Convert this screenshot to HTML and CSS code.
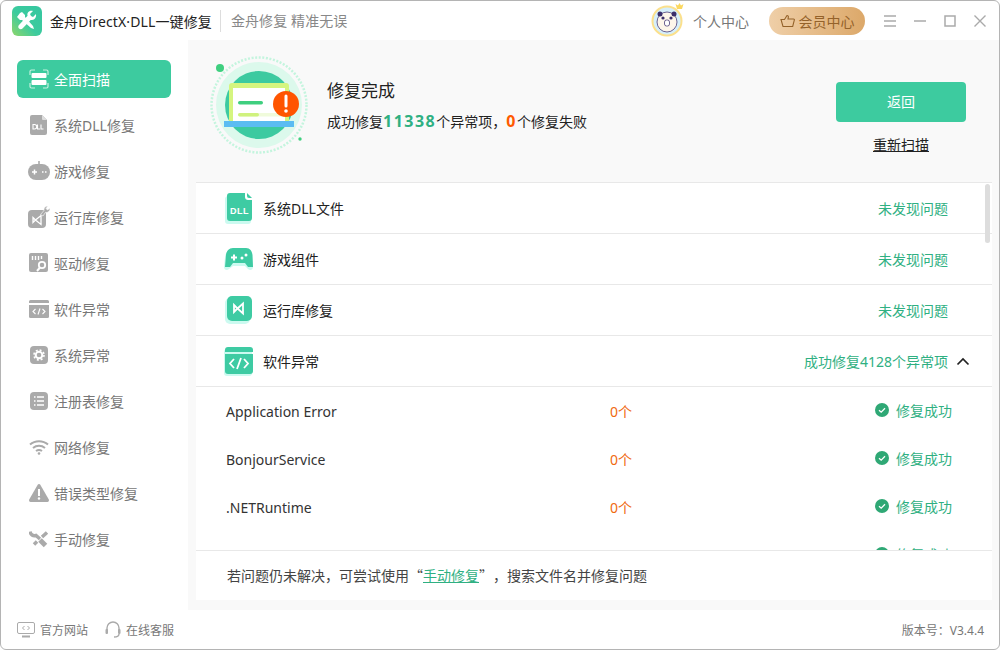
FILE: index.html
```html
<!DOCTYPE html>
<html lang="zh-CN">
<head>
    <meta charset="UTF-8">
    <title>金舟DirectX·DLL一键修复</title>
    <link rel="stylesheet" href="styles.css">
</head>
<body>
<div class="window">
    <header class="titlebar">
        <svg class="logo" width="30" height="30" viewBox="0 0 30 30">
            <defs><linearGradient id="lg" x1="0" y1="1" x2="1" y2="0"><stop offset="0" stop-color="#8fd66a"/><stop offset=".45" stop-color="#3ccb9e"/><stop offset="1" stop-color="#35c6a0"/></linearGradient></defs>
            <rect width="30" height="30" rx="6" fill="url(#lg)"/>
            <path d="M8 7l2-1 3 3 0 2 8 9 1 3-3-1-9-8h-2l-3-3z" fill="#fff"/>
            <path d="M24 8l-3 3-2-1-1-2 3-3c-2-.6-4 0-5 1.500-.7 1-.8 2.200-.4 3.300L7 19c-1 1-1 2.500 0 3.500s2.500 1 3.500 0l8.200-8.600c1.200.4 2.500.2 3.500-.6 1.500-1.200 2.200-3.300 1.800-5.300z" fill="#fff"/>
        </svg>
        <span class="app-name">金舟DirectX·DLL一键修复</span>
        <span class="slogan">金舟修复 精准无误</span>
        <svg class="avatar" width="34" height="38" viewBox="0 0 34 38">
            <circle cx="16" cy="21" r="15.500" fill="#fbe08c"/>
            <circle cx="16" cy="21" r="13.500" fill="#d6effa"/>
            <circle cx="16" cy="22" r="10" fill="#fdf6ea" stroke="#4b3f78" stroke-width=".8"/>
            <circle cx="9" cy="14" r="2.500" fill="#3b2f6b"/><circle cx="23" cy="14" r="2.500" fill="#3b2f6b"/>
            <circle cx="12" cy="18" r="1.600" fill="#3b2f6b"/><circle cx="20" cy="18" r="1.600" fill="#3b2f6b"/>
            <rect x="13.500" y="20" width="5" height="6" rx="2" fill="#fff" stroke="#4b3f78" stroke-width=".8"/>
            <path d="M26 9l-1.500-5 2.500 1.500L28.500 3l1.500 2.500L32.500 4 31 9z" fill="#fbd860"/>
        </svg>
        <span class="user-link">个人中心</span>
        <a class="vip-btn" href="#">
            <svg width="15" height="14" viewBox="0 0 15 14" fill="none" stroke="#94622a" stroke-width="1.100"><path d="M1 5.500h3.500L7 1.500c1 0 1.600.8 1.300 1.800L8 5h5.500c.7 0 1 .6.800 1.200l-1.600 6.300H3L1 5.500z"/></svg>
            会员中心
        </a>
        <div class="win-controls">
            <svg width="14" height="14" viewBox="0 0 14 14" stroke="#aaa" stroke-width="1.500"><path d="M1 2h12M1 7h12M1 12h12"/></svg>
            <svg width="14" height="14" viewBox="0 0 14 14" stroke="#aaa" stroke-width="1.500"><path d="M1 7h12"/></svg>
            <svg width="14" height="14" viewBox="0 0 14 14" fill="none" stroke="#aaa" stroke-width="1.500"><rect x="2" y="2" width="10" height="10"/></svg>
            <svg width="14" height="14" viewBox="0 0 14 14" stroke="#aaa" stroke-width="1.400"><path d="M1.500 1.500l11 11M12.500 1.500l-11 11"/></svg>
        </div>
    </header>

    <div class="body">
        <nav class="sidebar">
            <a class="nav-item active" href="#">
                <svg width="20" height="20" viewBox="0 0 20 20" fill="none" stroke="#c6f0e0" stroke-width="1.200"><path d="M1 6V2.500C1 1.700 1.700 1 2.500 1H6M14 1h3.500c.8 0 1.500.7 1.500 1.500V6M19 14v3.500c0 .8-.7 1.500-1.500 1.500H14M6 19H2.500C1.700 19 1 18.300 1 17.500V14"/><rect x="2.500" y="4" width="15" height="5" rx="1" fill="#fff" stroke="none"/><rect x="2.500" y="11" width="15" height="5" rx="1" fill="#fff" stroke="none"/></svg>
                全面扫描
            </a>
            <a class="nav-item" href="#">
                <svg width="20" height="20" viewBox="0 0 20 20"><path d="M3 0h10l5 5v13a2 2 0 0 1-2 2H3a2 2 0 0 1-2-2V2a2 2 0 0 1 2-2z" fill="#aaa"/><path d="M13 0l5 5h-4a1 1 0 0 1-1-1z" fill="#ddd"/><path d="M4 9.500v4.500h1.500a2.200 2.200 0 0 0 0-4.500zM8.500 9.500V14H11M12 9.500V14h2.500" fill="none" stroke="#fff" stroke-width="1.100"/></svg>
                系统DLL修复
            </a>
            <a class="nav-item" href="#">
                <svg width="22" height="20" viewBox="0 0 22 20"><path d="M10.200 0h1.600v4h-1.600z" fill="#aaa"/><rect y="3" width="22" height="16" rx="8" fill="#aaa"/><path d="M4 11h5M6.500 8.500v5M14 11h1.500M17 11h1.500" stroke="#fff" stroke-width="1.500"/></svg>
                游戏修复
            </a>
            <a class="nav-item" href="#">
                <svg width="22" height="22" viewBox="0 0 22 22"><rect y="4" width="18" height="18" rx="4" fill="#aaa"/><path d="M5 11.500l2.500 2.500L5 16.500zM7.500 14L13 9.500v9z" fill="none" stroke="#fff" stroke-width="1.300"/><path d="M12.500 8.500l3.500-4c-.5-2 1-4.500 4-4.500l-2 2.500 1.500 1.500L22 2c.3 3-2.500 5-4.500 4.300L15 10z" fill="#aaa" stroke="#fff" stroke-width=".6"/></svg>
                运行库修复
            </a>
            <a class="nav-item" href="#">
                <svg width="20" height="20" viewBox="0 0 20 20"><rect width="19" height="19" rx="2" fill="#aaa"/><path d="M3.500 3v4M6.500 3v4M9.500 3v4M12.500 3v3" stroke="#fff" stroke-width="1.400"/><circle cx="13" cy="12" r="3.200" fill="none" stroke="#fff" stroke-width="1.800"/><path d="M11 14.500L8 18" stroke="#fff" stroke-width="2"/></svg>
                驱动修复
            </a>
            <a class="nav-item" href="#">
                <svg width="20" height="18" viewBox="0 0 20 18"><path d="M1.500 0h17A1.500 1.500 0 0 1 20 1.500V3H0V1.500A1.500 1.500 0 0 1 1.500 0z" fill="#aaa"/><path d="M0 5h20v11.500a1.500 1.500 0 0 1-1.500 1.500h-17A1.500 1.500 0 0 1 0 16.500z" fill="#aaa"/><path d="M6.500 9L4 11.500 6.500 14M13.500 9l2.500 2.500-2.500 2.500M11 8.500l-2 6" fill="none" stroke="#fff" stroke-width="1.100"/></svg>
                软件异常
            </a>
            <a class="nav-item" href="#">
                <svg width="18" height="18" viewBox="0 0 18 18"><rect width="18" height="18" rx="4" fill="#aaa"/><circle cx="9" cy="9" r="3.300" fill="none" stroke="#fff" stroke-width="2"/><circle cx="9" cy="9" r="5" fill="none" stroke="#fff" stroke-width="1.600" stroke-dasharray="2 1.930"/></svg>
                系统异常
            </a>
            <a class="nav-item" href="#">
                <svg width="18" height="18" viewBox="0 0 18 18"><rect width="18" height="18" rx="4" fill="#aaa"/><path d="M4 5h1.500M7 5h7M4 9h1.500M7 9h7M4 13h1.500M7 13h7" stroke="#fff" stroke-width="1.400"/></svg>
                注册表修复
            </a>
            <a class="nav-item" href="#">
                <svg width="20" height="16" viewBox="0 0 20 16" fill="none" stroke="#aaa" stroke-width="2"><path d="M1 5.500c5-4.500 13-4.500 18 0M4 9c3.500-3 8.500-3 12 0M7 12c1.800-1.300 4.200-1.300 6 0"/><circle cx="10" cy="14.500" r="1.300" fill="#aaa" stroke="none"/></svg>
                网络修复
            </a>
            <a class="nav-item" href="#">
                <svg width="20" height="18" viewBox="0 0 20 18"><path d="M10 0c.6 0 1 .3 1.300.8l8.500 14.800c.5 1-.1 2.400-1.300 2.400h-17C.3 18-.3 16.600.2 15.600L8.700.8C9 .3 9.400 0 10 0z" fill="#aaa"/><path d="M10 5v7" stroke="#fff" stroke-width="2"/><circle cx="10" cy="14.500" r="1.200" fill="#fff"/></svg>
                错误类型修复
            </a>
            <a class="nav-item" href="#">
                <svg width="20" height="18" viewBox="0 0 20 18" fill="none" stroke="#aaa"><path d="M1 1.500c.5 3 3 5 6 4L11 9" stroke-width="3.500"/><path d="M11 10l5.500 5.500" stroke-width="5"/><path d="M18 2.500l-5 4.500M8 11.500l-3 3" stroke-width="3.500"/></svg>
                手动修复
            </a>
        </nav>

        <main class="main">
            <section class="hero">
                <svg class="hero-art" width="100" height="100" viewBox="0 0 100 100">
                    <circle cx="50" cy="50" r="47.500" fill="none" stroke="#c4f5de" stroke-width="2.500" stroke-dasharray="2 1.600"/>
                    <circle cx="50" cy="50" r="43" fill="#dcf9ec"/>
                    <circle cx="50" cy="50" r="34" fill="#3ccaa0"/>
                    <circle cx="11" cy="13" r="4" fill="#3fcf7f"/>
                    <circle cx="91" cy="84" r="1.700" fill="#3fcf7f"/>
                    <rect x="20" y="28" width="60" height="40" rx="3" fill="#d5f57f"/>
                    <rect x="24" y="33" width="52" height="35" fill="#fff"/>
                    <rect x="29" y="46" width="25" height="3.500" rx="1.700" fill="#3fcf7f"/>
                    <rect x="29" y="58" width="46" height="3.500" rx="1.700" fill="#f0fbdb"/>
                    <rect x="29" y="58" width="21" height="3.500" rx="1.700" fill="#d0f27e"/>
                    <rect x="15" y="66" width="70" height="6" fill="#5bbcf2"/>
                    <circle cx="77" cy="49" r="13" fill="#ff5500"/>
                    <path d="M77 41v10" stroke="#fff" stroke-width="3" stroke-linecap="round"/>
                    <circle cx="77" cy="56" r="1.800" fill="#fff"/>
                </svg>
                <div class="hero-text">
                    <h1>修复完成</h1>
                    <p>成功修复<b class="count-ok">11338</b>个异常项，<b class="count-fail">0</b>个修复失败</p>
                </div>
                <div class="hero-actions">
                    <a class="back-btn" href="#">返回</a>
                    <a class="rescan" href="#">重新扫描</a>
                </div>
            </section>

            <section class="panel">
                <div class="result-list">
                    <div class="row">
                        <svg width="28" height="32" viewBox="0 0 28 32"><path d="M3 2h16l8 8v17a3 3 0 0 1-3 3H4a3 3 0 0 1-3-3V4z" fill="#ccfaf0" transform="translate(-1 2)"/><path d="M5 1h15v4a3 3 0 0 0 3 3h4v18a3 3 0 0 1-3 3H5a3 3 0 0 1-3-3V4a3 3 0 0 1 3-3z" fill="#3ecba3"/><path d="M22 1l5 5h-3a2 2 0 0 1-2-2z" fill="#3ecba3"/><text x="14.500" y="21.500" class="dll-mark">DLL</text></svg>
                        <span class="row-title">系统DLL文件</span>
                        <span class="row-status">未发现问题</span>
                    </div>
                    <div class="row">
                        <svg width="30" height="24" viewBox="0 0 30 24"><path d="M9 2h13c4 0 6 3 7 7l1 10c0 3-3 4-5 2l-3-3H10l-4 3c-2 2-5 1-5-2L2 9c.5-4 3-7 7-7z" fill="#ccfaf0" transform="translate(-1 1)"/><path d="M9 1h13c4 0 6 3 6.500 7l.5 12h-5l-3-4H9l-3 4H1l1-12C2.500 4 5 1 9 1z" fill="#3ecba3"/><path d="M7 10.500h6M10 7.500v6" stroke="#fff" stroke-width="2"/><circle cx="18" cy="11" r="1.500" fill="#fff"/><circle cx="22" cy="8" r="1.500" fill="#fff"/></svg>
                        <span class="row-title">游戏组件</span>
                        <span class="row-status">未发现问题</span>
                    </div>
                    <div class="row">
                        <svg width="28" height="28" viewBox="0 0 28 28"><rect y="2" width="25" height="26" rx="5" fill="#ccfaf0"/><rect x="2" y="0" width="25" height="25" rx="5" fill="#3ecba3"/><path d="M9 9l3.500 3.500L9 16zM12.500 12.500L18 7.500v10z" fill="none" stroke="#fff" stroke-width="1.800"/></svg>
                        <span class="row-title">运行库修复</span>
                        <span class="row-status">未发现问题</span>
                    </div>
                    <div class="row">
                        <svg width="30" height="30" viewBox="0 0 30 30"><rect y="3" width="28" height="27" rx="3" fill="#ccfaf0"/><path d="M4 1h22a3 3 0 0 1 3 3v2H1V4a3 3 0 0 1 3-3z" fill="#3ecba3"/><path d="M1 8h28v17a3 3 0 0 1-3 3H4a3 3 0 0 1-3-3z" fill="#3ecba3"/><path d="M10 13l-4 4.500 4 4.500M20 13l4 4.500-4 4.500M17 12l-4 11" fill="none" stroke="#fff" stroke-width="1.800"/></svg>
                        <span class="row-title">软件异常</span>
                        <span class="row-status">成功修复4128个异常项</span>
                        <svg class="chevron" width="14" height="9" viewBox="0 0 14 9" fill="none" stroke="#222" stroke-width="1.700"><path d="M1.500 7.500L7 2l5.500 5.500"/></svg>
                    </div>
                    <div class="sub-row">
                        <span class="sub-name">Application Error</span>
                        <span class="sub-count">0个</span>
                        <span class="sub-state"><svg width="14" height="14" viewBox="0 0 14 14"><circle cx="7" cy="7" r="7" fill="#2fa875"/><path d="M4 7.200l2.200 2L10 5.300" fill="none" stroke="#fff" stroke-width="1.300"/></svg>修复成功</span>
                    </div>
                    <div class="sub-row">
                        <span class="sub-name">BonjourService</span>
                        <span class="sub-count">0个</span>
                        <span class="sub-state"><svg width="14" height="14" viewBox="0 0 14 14"><circle cx="7" cy="7" r="7" fill="#2fa875"/><path d="M4 7.200l2.200 2L10 5.300" fill="none" stroke="#fff" stroke-width="1.300"/></svg>修复成功</span>
                    </div>
                    <div class="sub-row">
                        <span class="sub-name">.NETRuntime</span>
                        <span class="sub-count">0个</span>
                        <span class="sub-state"><svg width="14" height="14" viewBox="0 0 14 14"><circle cx="7" cy="7" r="7" fill="#2fa875"/><path d="M4 7.200l2.200 2L10 5.300" fill="none" stroke="#fff" stroke-width="1.300"/></svg>修复成功</span>
                    </div>
                    <div class="sub-row">
                        <span class="sub-name"></span>
                        <span class="sub-count"></span>
                        <span class="sub-state"><svg width="14" height="14" viewBox="0 0 14 14"><circle cx="7" cy="7" r="7" fill="#2fa875"/></svg>修复成功</span>
                    </div>
                </div>
                <div class="scrollbar"></div>
                <div class="note">若问题仍未解决，可尝试使用<span class="quote">“</span><a href="#">手动修复</a><span class="quote">”</span>，搜索文件名并修复问题</div>
            </section>
        </main>
    </div>

    <footer class="statusbar">
        <a class="foot-link" href="#">
            <svg width="18" height="16" viewBox="0 0 18 16" fill="none" stroke="#aaa"><rect x=".5" y=".5" width="17" height="11" rx="1.500"/><path d="M5 14.500h8" stroke-width="2"/><path d="M7.500 4L5.500 6l2 2M10.500 4l2 2-2 2"/></svg>
            官方网站
        </a>
        <a class="foot-link" href="#">
            <svg width="16" height="18" viewBox="0 0 16 18" fill="none" stroke="#aaa" stroke-width="1.400"><path d="M2 10V7a6 6 0 0 1 12 0v3"/><rect x=".5" y="8" width="2.500" height="5" rx="1" fill="#aaa" stroke="none"/><rect x="13" y="8" width="2.500" height="5" rx="1" fill="#aaa" stroke="none"/><path d="M14 13c0 2-2 3-5 3"/></svg>
            在线客服
        </a>
        <span class="version">版本号：V3.4.4</span>
    </footer>
</div>
</body>
</html>
```

FILE: styles.css
```css
* {
    margin: 0;
    padding: 0;
    box-sizing: border-box;
}

html, body {
    width: 1000px;
    height: 650px;
    overflow: hidden;
    background: #fff;
}

body {
    font-family: "Noto Sans", "Noto Sans CJK SC", sans-serif;
    font-size: 14px;
    color: #333;
}

a {
    text-decoration: none;
    color: inherit;
}

.window {
    width: 1000px;
    height: 650px;
    display: flex;
    flex-direction: column;
    background: #fff;
    border: 1px solid #b4b4b4;
    border-radius: 6px;
    overflow: hidden;
}

/* Title bar */
.titlebar {
    height: 39px;
    flex: none;
    display: flex;
    align-items: center;
    padding-left: 11px;
}

.app-name {
    margin-left: 8px;
    letter-spacing: .12px;
    color: #222;
}

.slogan {
    margin-left: 8px;
    padding-left: 10px;
    border-left: 1px solid #ddd;
    line-height: 22px;
    color: #888;
    letter-spacing: .1px;
}

.avatar {
    margin-left: auto;
    margin-top: -4px;
}

.user-link {
    margin-left: 8px;
    color: #777;
}

.vip-btn {
    margin-left: 20px;
    width: 96px;
    height: 28px;
    border-radius: 14px;
    display: flex;
    align-items: center;
    justify-content: center;
    gap: 4px;
    color: #94622a;
    background: linear-gradient(90deg, #efcfa8, #dca869);
}

.win-controls {
    display: flex;
    gap: 16px;
    margin-left: 18px;
    margin-right: 12px;
}

/* Body */
.body {
    flex: 1;
    display: flex;
    min-height: 0;
}

.sidebar {
    width: 187px;
    flex: none;
    padding: 20px 17px 0 16px;
    display: flex;
    flex-direction: column;
    gap: 8px;
}

.nav-item {
    height: 38px;
    display: flex;
    align-items: center;
    position: relative;
    padding-left: 37px;
    border-radius: 6px;
    color: #777;
}

.nav-item svg {
    position: absolute;
    left: 22px;
    top: 50%;
    transform: translate(-50%, -50%);
}

.nav-item.active {
    background: #3dcb9f;
    color: #fff;
}

.main {
    flex: 1;
    display: flex;
    flex-direction: column;
    background: #f9f9f9;
    padding: 0 7px 10px 8px;
}

/* Result header */
.hero {
    height: 142px;
    flex: none;
    display: flex;
    align-items: flex-start;
    padding-left: 13px;
}

.hero-art {
    margin-top: 15px;
}

.hero-text {
    margin-left: 18px;
    margin-top: 39px;
    color: #222;
}

.hero-text h1 {
    font-size: 17px;
    font-weight: 400;
    line-height: 24px;
}

.hero-text p {
    margin-top: 7px;
    font-size: 14px;
    line-height: 22px;
}

.count-ok,
.count-fail {
    font-size: 16px;
    font-weight: 700;
    letter-spacing: 1.500px;
}

.count-ok {
    color: #2fb082;
}

.count-fail {
    color: #ff5a00;
}

.hero-actions {
    margin-left: auto;
    margin-right: 26px;
    margin-top: 42px;
    width: 130px;
    display: flex;
    flex-direction: column;
    align-items: center;
}

.back-btn {
    width: 130px;
    height: 40px;
    line-height: 39px;
    text-align: center;
    border-radius: 4px;
    background: #3dcb9f;
    color: #fff;
}

.rescan {
    margin-top: 12px;
    color: #222;
    text-decoration: underline;
    line-height: 22px;
}

/* Result list */
.panel {
    flex: 1;
    position: relative;
    display: flex;
    flex-direction: column;
    background: #fff;
    border-top: 1px solid #e8e8e8;
    min-height: 0;
}

.result-list {
    height: 368px;
    flex: none;
    overflow: hidden;
    border-bottom: 1px solid #e8e8e8;
}

.row {
    height: 51px;
    display: flex;
    align-items: center;
    position: relative;
    padding-left: 67px;
    border-bottom: 1px solid #e8e8e8;
}

.row svg:first-child {
    position: absolute;
    left: 43px;
    top: 50%;
    transform: translate(-50%, -50%);
}

.dll-mark {
    font-family: "Liberation Sans", sans-serif;
    font-size: 9px;
    font-weight: 700;
    fill: #fff;
    text-anchor: middle;
    letter-spacing: .5px;
}

.row-title {
    color: #222;
    font-size: 14px;
}

.row-status {
    margin-left: auto;
    margin-right: 44px;
    color: #2fb082;
}

.chevron {
    position: absolute;
    right: 22px;
    top: 21px;
}

.sub-row {
    height: 48px;
    display: flex;
    align-items: center;
    padding-left: 30px;
}

.sub-name {
    width: 384px;
    color: #333;
}

.sub-count {
    color: #f0690f;
}

.sub-state {
    margin-left: auto;
    margin-right: 40px;
    margin-bottom: 2px;
    display: flex;
    align-items: center;
    gap: 7px;
    color: #2fb082;
}

.scrollbar {
    position: absolute;
    top: 1px;
    right: 2px;
    width: 5px;
    height: 59px;
    border-radius: 3px;
    background: #ddd;
}

.note {
    flex: 1;
    display: flex;
    align-items: center;
    padding-left: 31px;
    padding-bottom: 2px;
    color: #444;
}

.quote {
    font-family: "Noto Sans CJK SC", sans-serif;
}

.note a {
    color: #2fb082;
    text-decoration: underline;
}

/* Status bar */
.statusbar {
    height: 39px;
    flex: none;
    display: flex;
    align-items: center;
    padding: 0 15px 0 16px;
    font-size: 12px;
    color: #777;
}

.foot-link {
    display: flex;
    align-items: center;
    gap: 5px;
    margin-right: 17px;
}

.version {
    margin-left: auto;
}
```
